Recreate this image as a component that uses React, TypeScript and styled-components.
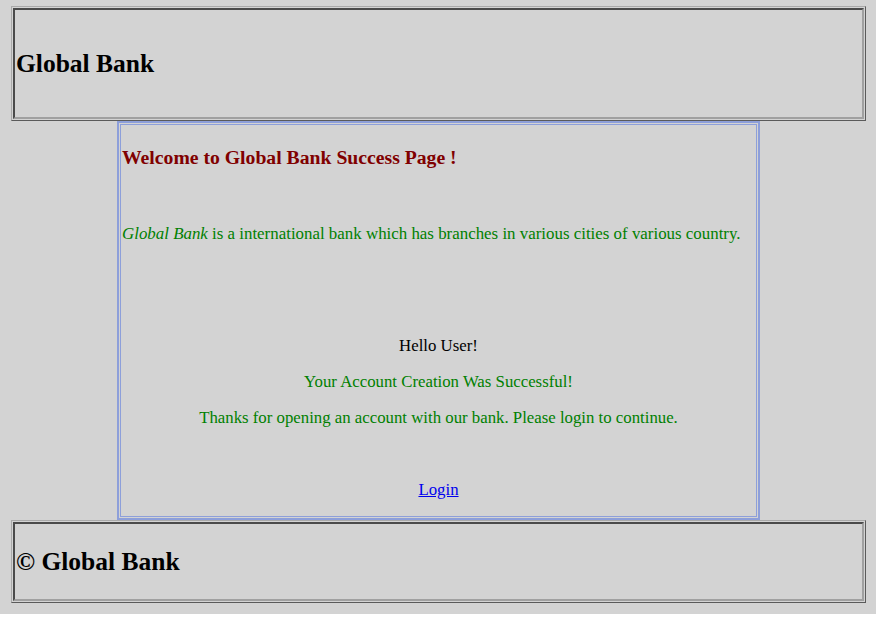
import styled, { createGlobalStyle } from "styled-components";

const GlobalStyle = createGlobalStyle`
  html {
    background: #ffffff;
  }
  body {
    margin: 0;
    font-family: "Liberation Serif", "Times New Roman", serif;
    color: #000;
  }
`

const Page = styled.div`
  background: #d3d3d3;
  height: 614px;
  padding: 6px 10px 0 11px;
  box-sizing: border-box;
  display: flex;
  flex-direction: column;
  align-items: stretch;
`

// table-like frame: an outset outer line, a gap, then the inset cell line
const Frame = styled.div<{ $tone: "grey" | "blue"; $width?: number; $height: number }>`
  box-sizing: border-box;
  height: ${(p) => p.$height}px;
  width: ${(p) => (p.$width ? `${p.$width}px` : "auto")};
  align-self: ${(p) => (p.$width ? "flex-start" : "stretch")};
  margin-left: ${(p) => (p.$width ? "106px" : "0")};
  border: ${(p) => (p.$tone === "grey" ? "1px" : "2px")} solid;
  border-color: ${(p) =>
    p.$tone === "grey" ? "#a9a9a9 #5a5a5a #5a5a5a #a9a9a9" : "#8d9fda"};
  padding: 1px;
  display: flex;
`

const Cell = styled.div<{ $tone: "grey" | "blue"; $center?: boolean }>`
  flex: 1;
  box-sizing: border-box;
  border: ${(p) => (p.$tone === "grey" ? "2px" : "1px")} solid;
  border-color: ${(p) =>
    p.$tone === "grey" ? "#4a4a4a #a0a0a0 #a0a0a0 #4a4a4a" : "#8d9fda"};
  padding: 0 1px;
  display: flex;
  flex-direction: column;
  justify-content: ${(p) => (p.$center ? "center" : "flex-start")};
`

const BrandTitle = styled.h2`
  margin: 0;
  font-size: 25.5px;
  font-weight: bold;
  line-height: 30px;
`

const WelcomeTitle = styled.h3`
  margin: 21px 0 0;
  font-size: 19.7px;
  font-weight: bold;
  color: #800000;
  line-height: 22px;
`

const Intro = styled.p`
  margin: 56px 0 0;
  font-size: 16.9px;
  line-height: 20px;
  color: #008000;
`

const Message = styled.p<{ $color?: string; $top?: number }>`
  margin: ${(p) => p.$top ?? 16}px 0 0;
  font-size: 16.8px;
  line-height: 20px;
  text-align: center;
  color: ${(p) => p.$color ?? "#000"};
`

const LoginLink = styled.a`
  color: #0000ee;
  text-decoration: underline;
`

export default function App() {
  return (
    <>
      <GlobalStyle />
      <Page>
        <Frame $tone="grey" $height={115}>
          <Cell $tone="grey" $center>
            <BrandTitle>Global Bank</BrandTitle>
          </Cell>
        </Frame>
        <Frame $tone="blue" $width={643} $height={399}>
          <Cell $tone="blue">
            <WelcomeTitle>Welcome to Global Bank Success Page !</WelcomeTitle>
            <Intro>
              <i>Global Bank</i> is a international bank which has branches in various cities of various country.
            </Intro>
            <Message $top={92}>Hello User!</Message>
            <Message $color="#008000">Your Account Creation Was Successful!</Message>
            <Message $color="#008000">
              Thanks for opening an account with our bank. Please login to continue.
            </Message>
            <Message $top={52}>
              <LoginLink href="#">Login</LoginLink>
            </Message>
          </Cell>
        </Frame>
        <Frame $tone="grey" $height={83}>
          <Cell $tone="grey" $center>
            <BrandTitle>© Global Bank</BrandTitle>
          </Cell>
        </Frame>
      </Page>
    </>
  )
}
